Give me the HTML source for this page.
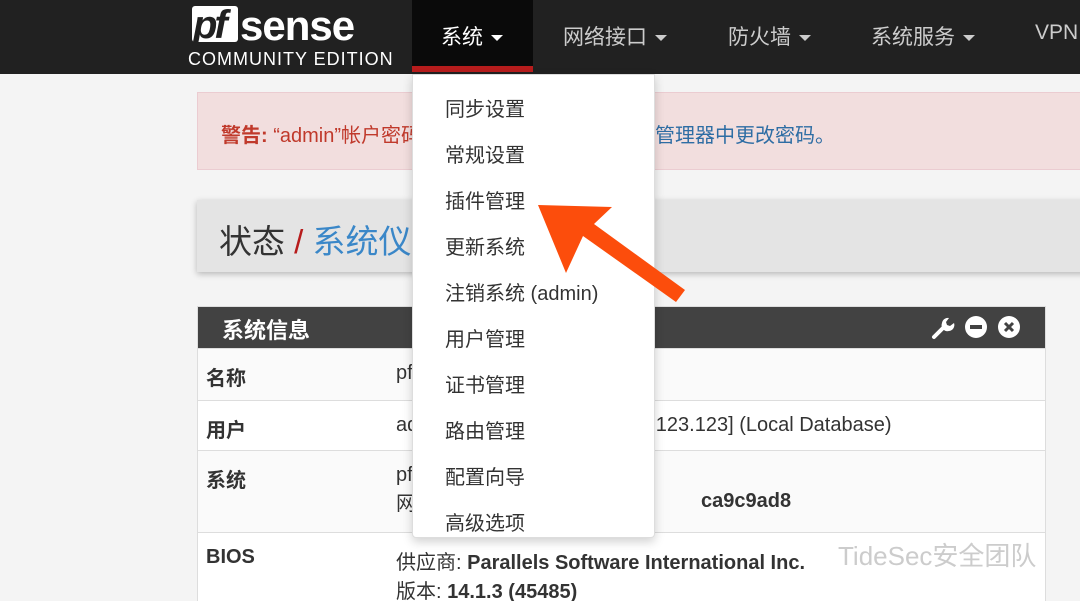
<!DOCTYPE html><html><head><meta charset="utf-8"><style>
*{margin:0;padding:0;box-sizing:border-box}
html,body{width:1080px;height:601px;overflow:hidden}
body{background:#f4f4f4;font-family:"Liberation Sans","Noto Sans CJK SC",sans-serif;position:relative;color:#333}
.nav{position:absolute;left:0;top:0;width:1080px;height:74px;background:#212121}
.nav .it{position:absolute;top:21px;color:#ccc;font-size:21px}
.caret{display:inline-block;border-left:6px solid transparent;border-right:6px solid transparent;border-top:6px solid currentColor;vertical-align:middle;margin-left:8px}
.act{position:absolute;left:412px;top:0;width:121px;height:72px;background:#0a0a0a;border-bottom:6px solid #b71c1c}
.alert{position:absolute;left:197px;top:92px;width:900px;height:78px;background:#f2dede;border:1px solid #ebccd1;color:#c0392b;font-size:20px;padding:26px 0 0 23px}
.bc{position:absolute;left:197px;top:200px;width:900px;height:72px;background:#e4e4e4;box-shadow:0 2px 6px rgba(0,0,0,.25);font-size:33px;padding:15px 0 0 22px;color:#333}
.panel{position:absolute;left:197px;top:306px;width:849px;height:300px;border:1px solid #ddd;background:#fafafa}
.ph{height:41px;background:#424242;color:#fff;font-size:22px;font-weight:bold;padding:6px 0 0 24px}
.row{position:absolute;left:0;width:847px;border-top:1px solid #ddd;font-size:20px}
.row b{position:absolute;left:8px;top:13px}
.row span{position:absolute;left:198px;top:13px}
.dd{position:absolute;left:412px;top:74px;width:243px;height:464px;background:#fff;border:1px solid #ddd;border-radius:0 0 4px 4px;box-shadow:0 4px 10px rgba(0,0,0,.18)}
.dd div{position:absolute;left:32px;font-size:20px;color:#333}
</style></head><body>
<div class="nav">
<div style="position:absolute;left:192px;top:6px;width:46px;height:36px;background:#fff;border-radius:3px"></div>
<div style="position:absolute;left:193px;top:3px;font-size:40px;font-weight:bold;font-style:italic;color:#212121;letter-spacing:-3px">pf</div>
<div style="position:absolute;left:240px;top:2px;font-size:42px;font-weight:bold;color:#fff;letter-spacing:-1px">sense</div>
<div style="position:absolute;left:188px;top:49px;font-size:18px;color:#fff;letter-spacing:1px">COMMUNITY EDITION</div>
<div class="act"></div>
<div class="it" style="left:441px;color:#fff">系统<span class="caret"></span></div>
<div class="it" style="left:563px">网络接口<span class="caret"></span></div>
<div class="it" style="left:728px">防火墙<span class="caret"></span></div>
<div class="it" style="left:871px">系统服务<span class="caret"></span></div>
<div class="it" style="left:1035px">VPN</div>
</div>
<div class="alert"><b>警告:</b> “admin”帐户密码<span style="position:absolute;left:457px;color:#2e6da4">管理器中更改密码。</span></div>
<div class="bc">状态 <span style="color:#b71c1c">/</span> <span style="color:#3a87c8">系统仪表盘</span></div>
<div class="panel"><div class="ph">系统信息
<svg style="position:absolute;left:732px;top:8px" width="26" height="26" viewBox="0 0 26 26"><path d="M4 22 L14 12" stroke="#fff" stroke-width="4" stroke-linecap="round"/><path d="M12 8 a6 6 0 0 0 7 8 a6 6 0 0 0 5-8 l-4 3-3-1-1-3 3-4 a6 6 0 0 0-7 5z" fill="#fff"/></svg>
<svg style="position:absolute;left:766px;top:8px" width="24" height="24"><circle cx="12" cy="12" r="11" fill="#fff"/><rect x="6" y="10" width="12" height="4" fill="#424242"/></svg>
<svg style="position:absolute;left:799px;top:8px" width="24" height="24"><circle cx="12" cy="12" r="11" fill="#fff"/><path d="M8 8L16 16M16 8L8 16" stroke="#424242" stroke-width="3"/></svg>
</div>
<div class="row" style="top:41px;height:52px"><b>名称</b><span>pfSense</span></div>
<div class="row" style="top:93px;height:50px;background:#fff"><b>用户</b><span>admin</span><span style="left:430px">23.123.123] (Local Database)</span></div>
<div class="row" style="top:143px;height:82px"><b>系统</b><span>pfSense<br>网关 <b style="position:absolute;left:305px;top:26px">ca9c9ad8</b></span></div>
<div class="row" style="top:225px;height:80px;background:#fff"><b>BIOS</b><span>供应商: <b style="position:static">Parallels Software International Inc.</b><br>版本: <b style="position:static">14.1.3 (45485)</b></span></div>
</div>
<div style="position:absolute;left:838px;top:536px;font-size:26px;color:#ccc">TideSec安全团队</div>
<div class="dd">
<div style="top:18px">同步设置</div><div style="top:64px">常规设置</div><div style="top:110px">插件管理</div><div style="top:156px">更新系统</div><div style="top:202px">注销系统 (admin)</div><div style="top:248px">用户管理</div><div style="top:294px">证书管理</div><div style="top:340px">路由管理</div><div style="top:386px">配置向导</div><div style="top:432px">高级选项</div>
</div>
<svg style="position:absolute;left:0;top:0" width="1080" height="601"><polygon points="538,205 612,207 594,224 685,290 676,302 583,236 566,273" fill="#fc4d0c"/></svg>
</body></html>
